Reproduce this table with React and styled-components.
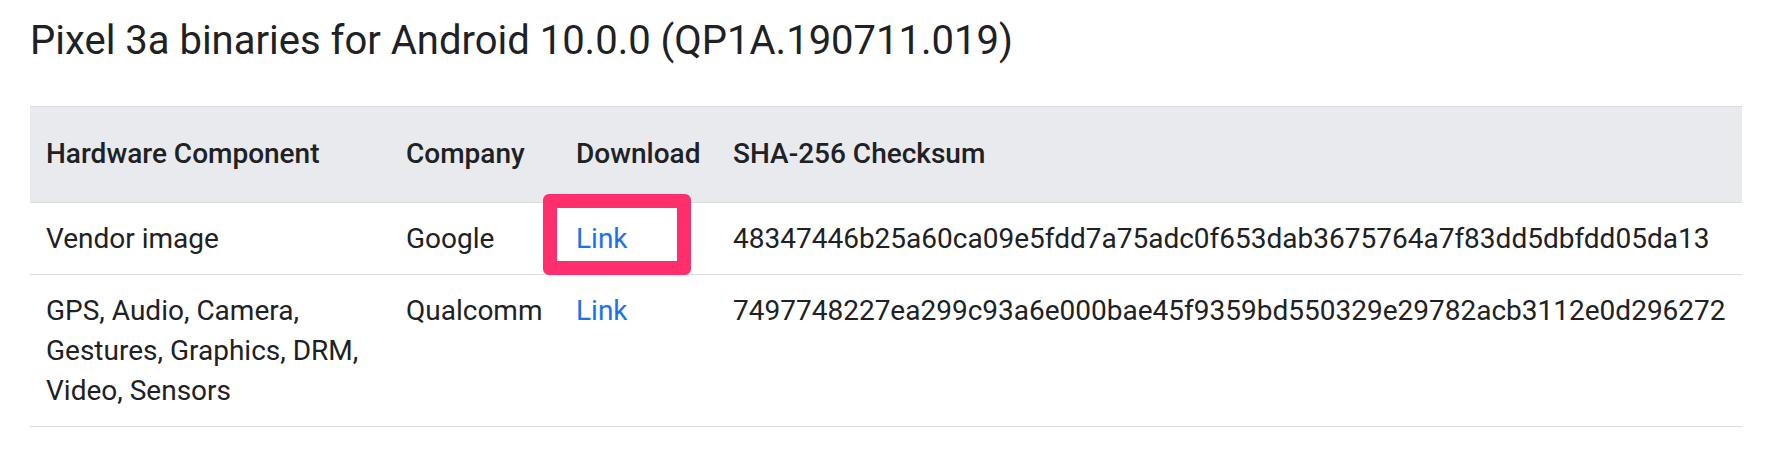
import React from 'react';
import styled, {createGlobalStyle} from 'styled-components';

const GlobalStyle = createGlobalStyle`
  html, body {
    margin: 0;
    padding: 0;
    background: #ffffff;
  }
  body {
    font-family: Roboto, "Liberation Sans", Arial, sans-serif;
    color: #202124;
  }
`;

const Page = styled.div`
  padding: 17px 40px 0 30px;
`;

const Title = styled.h2`
  margin: 0 0 41px;
  font-size: 40px;
  line-height: 48px;
  font-weight: 400;
  color: #202124;
`;

const Table = styled.table`
  width: 1712px;
  table-layout: fixed;
  border-collapse: collapse;
  border-top: 1px solid #dadce0;
  font-size: 28px;
  line-height: 40px;
`;

const HeadRow = styled.tr`
  background: #e8eaed;
  border-bottom: 1px solid #dadce0;
`;

const Th = styled.th`
  padding: 27px 16px 28px;
  text-align: left;
  font-weight: 500;
  color: #202124;
  white-space: nowrap;
`;

const Row = styled.tr`
  border-bottom: 1px solid #dadce0;
`;

const Td = styled.td`
  padding: 16px 16px 15px;
  vertical-align: top;
  color: #202124;
  white-space: ${p => (p.$nowrap ? 'nowrap' : 'normal')};
`;

const LinkWrap = styled.span`
  position: relative;
  display: inline-block;
`;

const Link = styled.a`
  color: #1a73e8;
  text-decoration: none;
`;

const Highlight = styled.span`
  position: absolute;
  left: -33px;
  top: -25px;
  width: 148px;
  height: 81px;
  box-sizing: border-box;
  border: 14px solid #fe2f6c;
  border-radius: 6px;
  pointer-events: none;
`;

const rows = [
  {
    component: 'Vendor image',
    company: 'Google',
    sha: '48347446b25a60ca09e5fdd7a75adc0f653dab3675764a7f83dd5dbfdd05da13',
    marked: true,
  },
  {
    component: 'GPS, Audio, Camera, Gestures, Graphics, DRM, Video, Sensors',
    company: 'Qualcomm',
    sha: '7497748227ea299c93a6e000bae45f9359bd550329e29782acb3112e0d296272',
  },
];

export default function App() {
  return (
    <Page>
      <GlobalStyle />
      <Title>Pixel 3a binaries for Android 10.0.0 (QP1A.190711.019)</Title>
      <Table>
        <colgroup>
          <col style={{width: 360}} />
          <col style={{width: 170}} />
          <col style={{width: 157}} />
          <col style={{width: 1025}} />
        </colgroup>
        <thead>
          <HeadRow>
            <Th>Hardware Component</Th>
            <Th>Company</Th>
            <Th>Download</Th>
            <Th>SHA-256 Checksum</Th>
          </HeadRow>
        </thead>
        <tbody>
          {rows.map(r => (
            <Row key={r.sha}>
              <Td>{r.component}</Td>
              <Td>{r.company}</Td>
              <Td>
                <LinkWrap>
                  <Link href="#">Link</Link>
                  {r.marked && <Highlight />}
                </LinkWrap>
              </Td>
              <Td $nowrap>{r.sha}</Td>
            </Row>
          ))}
        </tbody>
      </Table>
    </Page>
  );
}
